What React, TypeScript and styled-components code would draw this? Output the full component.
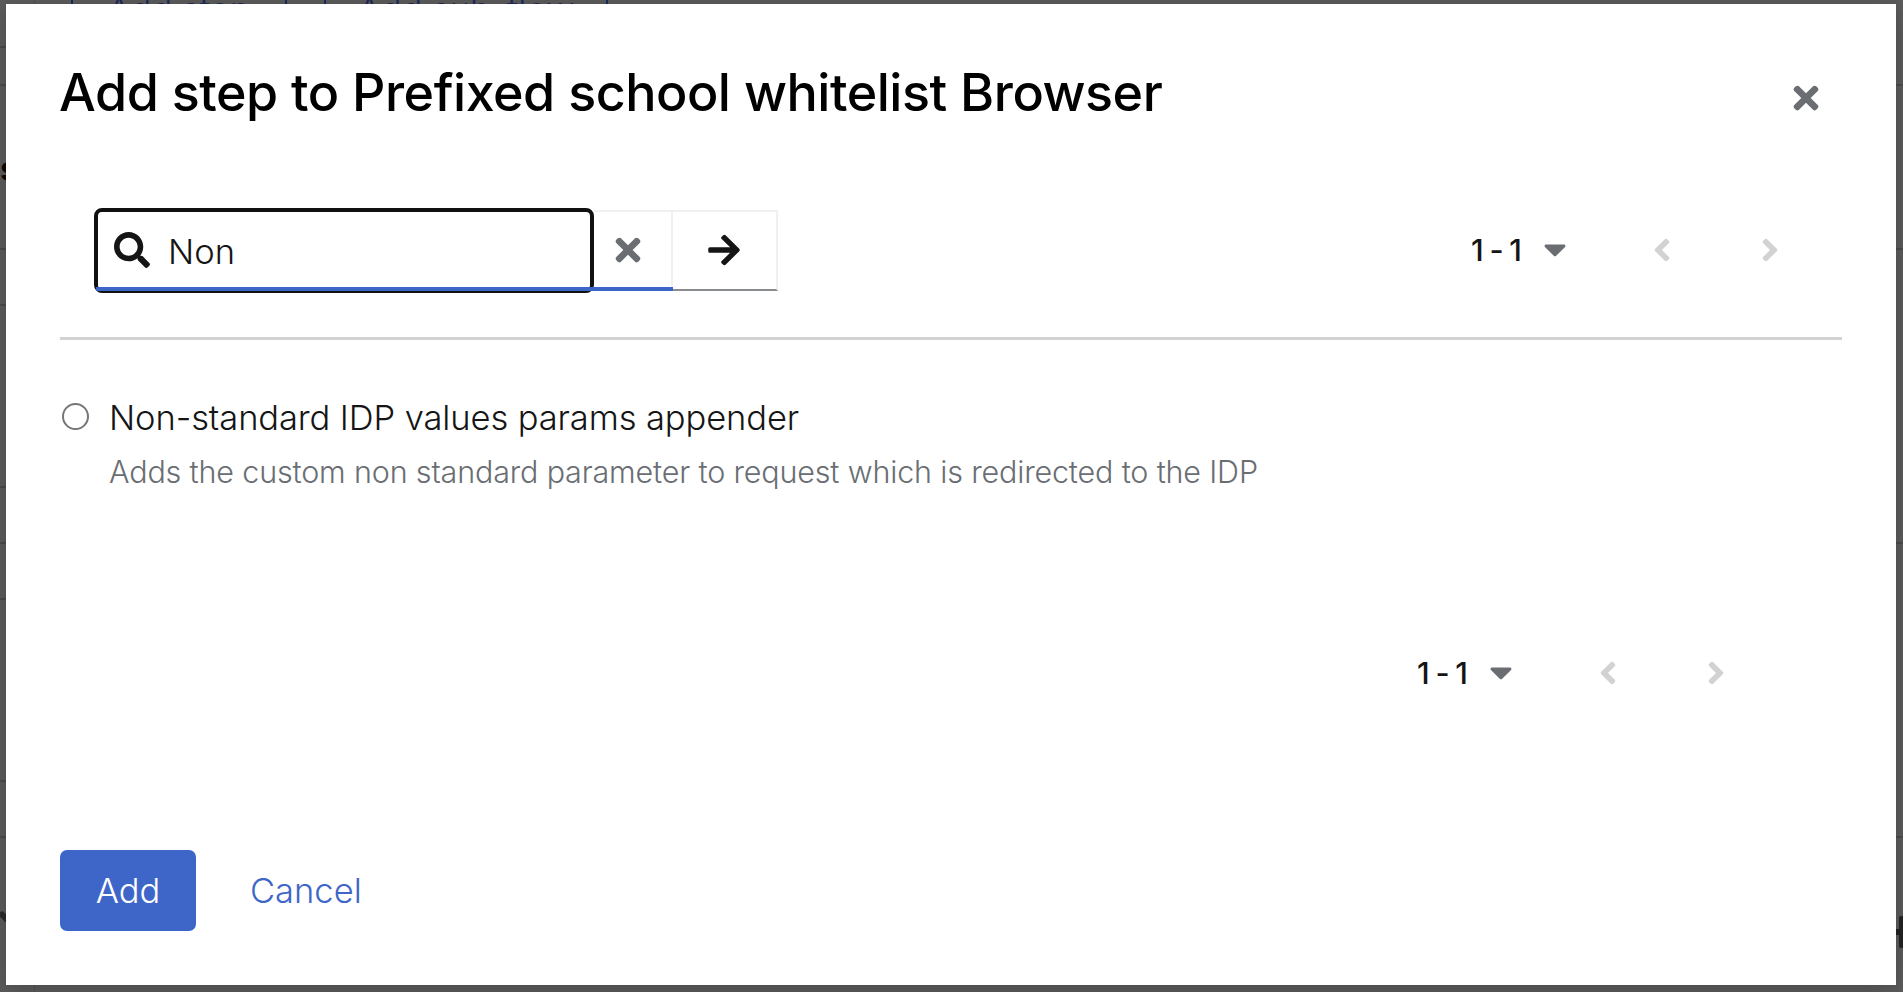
import React from "react";
import styled, { createGlobalStyle } from "styled-components";
import {
  FaAngleLeft,
  FaAngleRight,
  FaArrowRight,
  FaCaretDown,
  FaSearch,
  FaTimes,
} from "react-icons/fa";

const GlobalStyle = createGlobalStyle`
  * { box-sizing: border-box; }
  body {
    margin: 0;
    overflow: hidden;
    background: #5c5c5c;
    color: #151515;
    font-family: Inter, "Open Sans", sans-serif;
    font-weight: 300;
  }
  button, input {
    margin: 0;
    padding: 0;
    border: 0;
    background: none;
    color: inherit;
    font: inherit;
  }
`;

const Page = styled.div`
  position: relative;
  width: 1903px;
  height: 992px;
  overflow: hidden;
`;

const Backdrop = styled.div`
  display: flex;
  justify-content: space-between;
  height: 100%;
`;

const EdgeColumn = styled.div`
  display: flex;
  flex-direction: column;
  width: 34px;
  overflow: hidden;
`;

const EdgeRow = styled.div<{ $height: number; $last?: boolean }>`
  flex: none;
  display: flex;
  align-items: center;
  height: ${(p) => p.$height}px;
  border-bottom: ${(p) => (p.$last ? 0 : 2)}px solid #4c4c4c;
`;

const EdgeLabel = styled.span`
  padding-top: 4px;
  font-size: 34px;
  font-weight: 700;
  line-height: 40px;
  color: #0c0907;
`;

const BackToolbar = styled.div`
  flex: 1;
  display: flex;
  align-items: flex-start;
  gap: 37px;
  padding-left: 36px;
  border-left: 1px solid #515151;
`;

const BackButton = styled.span<{ $width: number }>`
  width: ${(p) => p.$width}px;
  height: 50px;
  margin-top: -16px;
  border: 2px solid #1c2a5c;
  border-top: 0;
  color: #1c2a5c;
  font-size: 34.5px;
  line-height: 52px;
  text-align: center;
  white-space: nowrap;
`;

const Modal = styled.section`
  position: absolute;
  top: 4px;
  left: 6px;
  width: 1890px;
  height: 981px;
  padding: 56px 54px 54px;
  background: #fff;
  box-shadow: 0 8px 24px rgba(3, 3, 3, 0.14), 0 0 12px rgba(3, 3, 3, 0.08);
`;

const Header = styled.header`
  display: flex;
  justify-content: space-between;
  height: 64px;
`;

const Title = styled.h1`
  margin: 0 0 0 -1px;
  color: #000;
  font-size: 52px;
  font-weight: 500;
  line-height: 66px;
  letter-spacing: -0.48px;
  white-space: nowrap;
`;

const IconButton = styled.button<{ $color: string }>`
  display: flex;
  align-items: center;
  justify-content: center;
  width: 36px;
  height: 36px;
  color: ${(p) => p.$color};
  font-size: 36px;
`;

const CloseButton = styled(IconButton)`
  margin: 20px 18px 0 0;
`;

const CaretButton = styled(IconButton)`
  margin: 0 1px 2px -1px;
`;

const Toolbar = styled.div`
  display: flex;
  align-items: center;
  justify-content: space-between;
  height: 85px;
  margin-top: 84px;
  padding: 0 54px 1px 34px;
`;

const SearchGroup = styled.div`
  display: flex;
  align-self: flex-start;
  align-items: flex-start;
  height: 85px;
`;

const SearchBox = styled.label`
  position: relative;
  display: flex;
  align-items: center;
  gap: 18px;
  width: 500px;
  height: 85px;
  padding: 0 16px 1px;
  border: 4px solid #111;
  border-radius: 8px;
  font-size: 36px;

  &::after {
    content: "";
    position: absolute;
    left: -2px;
    bottom: -2px;
    width: 498px;
    height: 4px;
    background: #3d65c8;
  }
`;

const SearchInput = styled.input`
  width: 380px;
  height: 44px;
  margin-top: 3px;
  outline: 0;
  font-size: 34.5px;
  line-height: 44px;
`;

const ClearButton = styled.button`
  display: flex;
  align-items: center;
  justify-content: center;
  width: 79px;
  height: 81px;
  margin-top: 2px;
  padding-right: 11px;
  border-top: 2px solid #f0f0f0;
  border-bottom: 4px solid #3d65c8;
  box-shadow: inset -2px 0 0 #f0f0f0;
  color: #6a6e73;
  font-size: 36px;
`;

const SubmitButton = styled.button`
  display: flex;
  align-items: center;
  justify-content: center;
  width: 105px;
  height: 81px;
  margin-top: 2px;
  padding: 0 2px 2px 0;
  border: 2px solid #f0f0f0;
  border-left: 0;
  border-bottom-color: #8a8d90;
  font-size: 36px;
`;

const PaginationRow = styled.div`
  display: flex;
  align-items: center;
  height: 40px;
`;

const Range = styled.span`
  width: 67px;
  font-size: 30.5px;
  font-weight: 500;
  line-height: 40px;
  letter-spacing: -1.2px;
  white-space: nowrap;
`;

const PageButtons = styled.span`
  display: flex;
  gap: 72px;
  margin-left: 70px;
`;

const Divider = styled.hr`
  height: 3px;
  margin: 44px 0 0;
  border: 0;
  background: #d2d2d2;
`;

const Option = styled.label`
  display: grid;
  grid-template-columns: 49px 1fr;
  row-gap: 13px;
  align-items: center;
  margin-top: 56px;
`;

const Radio = styled.input`
  appearance: none;
  width: 27px;
  height: 27px;
  margin-left: 2px;
  margin-top: -2px;
  border: 2px solid #767676;
  border-radius: 50%;
`;

const OptionName = styled.span`
  font-size: 34.5px;
  line-height: 43px;
  letter-spacing: -0.1px;
  white-space: nowrap;
`;

const OptionDescription = styled.span`
  grid-column: 2;
  color: #6a6e73;
  font-size: 30.5px;
  line-height: 40px;
  letter-spacing: -0.165px;
  white-space: nowrap;
`;

const BottomPagination = styled.div`
  display: flex;
  justify-content: flex-end;
  margin-top: 161px;
  padding-right: 108px;
`;

const Footer = styled.footer`
  display: flex;
  margin-top: 157px;
`;

const FooterButton = styled.button<{ $primary?: boolean }>`
  height: 81px;
  padding: ${(p) => (p.$primary ? 0 : "0 54px")};
  width: ${(p) => (p.$primary ? "136px" : "auto")};
  border-radius: 7px;
  background: ${(p) => (p.$primary ? "#3e66c8" : "transparent")};
  color: ${(p) => (p.$primary ? "#fff" : "#3e66c8")};
  font-size: 34.5px;
  line-height: 81px;
`;

const BackIcon = styled.svg`
  display: block;
  flex: none;
`;

function Pagination() {
  return (
    <PaginationRow>
      <Range>1 - 1</Range>
      <CaretButton $color="#6a6e73" aria-label="Items per page">
        <FaCaretDown />
      </CaretButton>
      <PageButtons>
        <IconButton $color="#d2d2d2" aria-label="Previous page">
          <FaAngleLeft />
        </IconButton>
        <IconButton $color="#d2d2d2" aria-label="Next page">
          <FaAngleRight />
        </IconButton>
      </PageButtons>
    </PaginationRow>
  );
}

export default function App() {
  return (
    <>
      <GlobalStyle />
      <Page>
        <Backdrop aria-hidden="true">
          <EdgeColumn>
            <EdgeRow $height={48} />
            <EdgeRow $height={38} />
            <EdgeRow $height={164}>
              <EdgeLabel>s</EdgeLabel>
            </EdgeRow>
            <EdgeRow $height={56} />
            <EdgeRow $height={182} />
            <EdgeRow $height={56} />
            <EdgeRow $height={56} />
            <EdgeRow $height={182} />
            <EdgeRow $height={56} />
            <EdgeRow $height={154} $last>
              <BackIcon width="12" height="16" viewBox="0 0 12 16">
                <path d="M2 7.5 L10 15.5" stroke="#292b2d" strokeWidth="6" strokeLinecap="round" />
              </BackIcon>
            </EdgeRow>
          </EdgeColumn>
          <BackToolbar>
            <BackButton $width={216}>Add step</BackButton>
            <BackButton $width={284}>Add sub-flow</BackButton>
          </BackToolbar>
          <EdgeColumn>
            <EdgeRow $height={86} />
            <EdgeRow $height={164} />
            <EdgeRow $height={294} />
            <EdgeRow $height={294} />
            <EdgeRow $height={188} $last>
              <BackIcon width="34" height="32" viewBox="0 0 34 32">
                <rect x="20" y="13" width="14" height="6" fill="#232425" />
                <rect x="30" y="0" width="12" height="32" rx="2" fill="#232425" />
              </BackIcon>
            </EdgeRow>
          </EdgeColumn>
        </Backdrop>

        <Modal role="dialog" aria-modal="true">
          <Header>
            <Title>Add step to Prefixed school whitelist Browser</Title>
            <CloseButton $color="#6a6e73" aria-label="Close">
              <FaTimes />
            </CloseButton>
          </Header>

          <Toolbar>
            <SearchGroup>
              <SearchBox>
                <FaSearch />
                <SearchInput defaultValue="Non" aria-label="Search" />
              </SearchBox>
              <ClearButton aria-label="Clear">
                <FaTimes />
              </ClearButton>
              <SubmitButton aria-label="Search">
                <FaArrowRight />
              </SubmitButton>
            </SearchGroup>
            <Pagination />
          </Toolbar>

          <Divider />

          <Option>
            <Radio type="radio" name="provider" />
            <OptionName>Non-standard IDP values params appender</OptionName>
            <OptionDescription>
              Adds the custom non standard parameter to request which is redirected to the IDP
            </OptionDescription>
          </Option>

          <BottomPagination>
            <Pagination />
          </BottomPagination>

          <Footer>
            <FooterButton $primary>Add</FooterButton>
            <FooterButton>Cancel</FooterButton>
          </Footer>
        </Modal>
      </Page>
    </>
  );
}
